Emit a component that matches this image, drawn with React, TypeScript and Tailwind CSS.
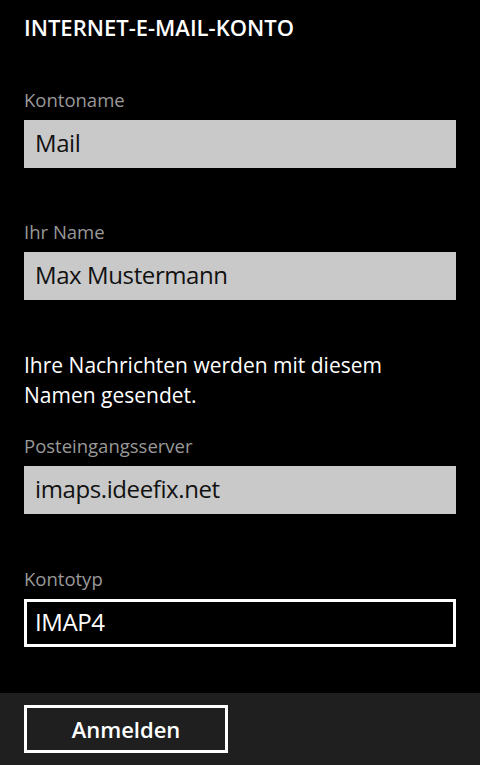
import React from 'react';

const font = { fontFamily: '"Open Sans", "Noto Sans", sans-serif' };

function Field({ label, value, className = '' }: { label: string; value: string; className?: string }) {
  return (
    <div className={className}>
      <p className="text-[18.5px] leading-[24px] text-[#999999]">{label}</p>
      <div className="mt-2 h-[48px] w-[432px] bg-[#c9c9c9] pl-[11px] text-[24px] leading-[45px] tracking-[-0.4px] text-[#111111]">
        {value}
      </div>
    </div>
  );
}

export default function App() {
  return (
    <div className="flex h-[765px] w-[480px] flex-col bg-black text-white" style={font}>
      <div className="flex-1 pl-6">
        <h1 className="mt-[13px] text-[22px] font-semibold leading-[28px] text-white">
          INTERNET-E-MAIL-KONTO
        </h1>

        <Field className="mt-[47px]" label="Kontoname" value="Mail" />
        <Field className="mt-[52px]" label="Ihr Name" value="Max Mustermann" />

        <p className="mt-[50px] w-[420px] text-[21px] leading-[30px] text-white">
          Ihre Nachrichten werden mit diesem Namen gesendet.
        </p>

        <Field className="mt-[24px]" label="Posteingangsserver" value="imaps.ideefix.net" />

        <div className="mt-[53px]">
          <p className="text-[18.5px] leading-[24px] text-[#999999]">Kontotyp</p>
          <div className="mt-2 h-[48px] w-[432px] border-[3px] border-white pl-[8px] text-[24px] leading-[39px] tracking-[-0.4px] text-white">
            IMAP4
          </div>
        </div>
      </div>

      <div className="h-[72px] bg-[#1f1f1f] pl-6 pt-3">
        <button className="h-[48px] w-[204px] border-[3px] border-white text-[22px] font-semibold leading-none text-white">
          Anmelden
        </button>
      </div>
    </div>
  );
}
